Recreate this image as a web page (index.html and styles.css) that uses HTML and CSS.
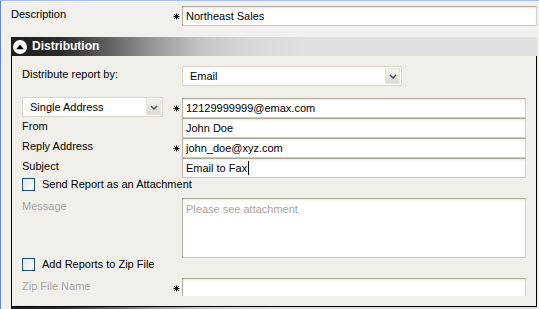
FILE: index.html
```html
<!DOCTYPE html>
<html>
<head>
<meta charset="utf-8">
<link rel="stylesheet" href="styles.css">
</head>
<body>
<div class="page">
  <div class="top-row">
    <span class="lbl">Description</span>
    <span class="req"><svg width="7" height="7" viewBox="0 0 7 7"><path d="M3.5 0.5V6.5M0.5 3.5H6.5M1.3 1.3L5.7 5.7M5.7 1.3L1.3 5.7" stroke="#000" stroke-width="0.9"/></svg></span>
    <div class="input">Northeast Sales</div>
  </div>

  <div class="sec-head">
    <span class="toggle"><svg width="14" height="14" viewBox="0 0 14 14"><circle cx="7" cy="7" r="7" fill="#fff"/><polygon points="3.2,9.2 7,4.4 10.8,9.2" fill="#000"/></svg></span>
    <span class="sec-title">Distribution</span>
  </div>

  <div class="panel">
    <div class="panel-inner">
      <div class="row row-dist">
        <span class="lbl">Distribute report by:</span>
        <span class="req"></span>
        <div class="select select-email">
          <span class="sel-text">Email</span>
          <span class="arrow"><svg width="8" height="5" viewBox="0 0 8 5"><polyline points="1,1 4,4 7,1" fill="none" stroke="#4a5670" stroke-width="1.6"/></svg></span>
        </div>
      </div>

      <div class="row">
        <div class="select select-type">
          <span class="sel-text">Single Address</span>
          <span class="arrow"><svg width="8" height="5" viewBox="0 0 8 5"><polyline points="1,1 4,4 7,1" fill="none" stroke="#4a5670" stroke-width="1.6"/></svg></span>
        </div>
        <span class="req"><svg width="7" height="7" viewBox="0 0 7 7"><path d="M3.5 0.5V6.5M0.5 3.5H6.5M1.3 1.3L5.7 5.7M5.7 1.3L1.3 5.7" stroke="#000" stroke-width="0.9"/></svg></span>
        <div class="input">12129999999@emax.com</div>
      </div>

      <div class="row">
        <span class="lbl">From</span>
        <span class="req"></span>
        <div class="input">John Doe</div>
      </div>

      <div class="row">
        <span class="lbl">Reply Address</span>
        <span class="req"><svg width="7" height="7" viewBox="0 0 7 7"><path d="M3.5 0.5V6.5M0.5 3.5H6.5M1.3 1.3L5.7 5.7M5.7 1.3L1.3 5.7" stroke="#000" stroke-width="0.9"/></svg></span>
        <div class="input">john_doe@xyz.com</div>
      </div>

      <div class="row">
        <span class="lbl">Subject</span>
        <span class="req"></span>
        <div class="input">Email to Fax<span class="caret"></span></div>
      </div>

      <div class="check-row">
        <span class="cb"></span>
        <span class="cb-label">Send Report as an Attachment</span>
      </div>

      <div class="row row-msg">
        <span class="lbl dim">Message</span>
        <span class="req"></span>
        <div class="input textarea">Please see attachment</div>
      </div>

      <div class="check-row">
        <span class="cb"></span>
        <span class="cb-label">Add Reports to Zip File</span>
      </div>

      <div class="row">
        <span class="lbl dim">Zip File Name</span>
        <span class="req"><svg width="7" height="7" viewBox="0 0 7 7"><path d="M3.5 0.5V6.5M0.5 3.5H6.5M1.3 1.3L5.7 5.7M5.7 1.3L1.3 5.7" stroke="#000" stroke-width="0.9"/></svg></span>
        <div class="input"></div>
      </div>
    </div>
  </div>

  <div class="sec-head"></div>
</div>
</body>
</html>
```

FILE: styles.css
```css
html, body {
  margin: 0;
  padding: 0;
}

body {
  width: 539px;
  height: 309px;
  overflow: hidden;
  background: #f2f0ec;
  font-family: "Liberation Sans", Arial, sans-serif;
  font-size: 11px;
  color: #000;
}

.page {
  border-top: 1px solid #a9c0ea;
  border-left: 1px solid #5a85e0;
  height: 308px;
  overflow: hidden;
}

.top-row {
  display: grid;
  grid-template-columns: 160px 11px 355px;
  height: 20px;
  margin: 5px 0 0 10px;
}

.lbl {
  line-height: 13px;
  padding-top: 2px;
  white-space: nowrap;
}

.dim {
  color: #a6a6a6;
}

.req {
  display: flex;
  align-items: center;
  justify-content: center;
  padding-right: 1px;
}

.req svg {
  display: block;
}

.input {
  box-sizing: border-box;
  height: 20px;
  background: #fff;
  border: 1px solid;
  border-color: #aeaa9c #d3d0c6 #c9c6bb #b6b2a5;
  box-shadow: inset 0 1px 2px rgba(0, 0, 0, 0.10);
  padding: 0 3px;
  line-height: 18px;
  white-space: nowrap;
  overflow: hidden;
}

.textarea {
  height: 60px;
  line-height: 13px;
  padding-top: 4px;
  color: #a6a6a6;
}

.caret {
  display: inline-block;
  width: 1px;
  height: 14px;
  background: #000;
  vertical-align: -3px;
  margin-left: 1px;
}

.sec-head {
  box-sizing: border-box;
  width: 526px;
  height: 19px;
  margin-left: 10px;
  display: flex;
  align-items: center;
  background: linear-gradient(to right, #1c1c1c 0px, #2c2c2c 50px, #5e5e5e 95px, #959595 140px, #c5c5c5 190px, #d9d9d9 240px, #e0e0e0 290px);
}

.top-row + .sec-head {
  margin-top: 11px;
}

.toggle {
  display: flex;
  margin-left: 2px;
}

.toggle svg {
  display: block;
}

.sec-title {
  margin-left: 5px;
  color: #fff;
  font-weight: bold;
  font-size: 12px;
  line-height: 19px;
}

.panel {
  box-sizing: border-box;
  width: 526px;
  margin-left: 10px;
  border: 1px solid #000;
  border-top: none;
  padding-bottom: 10px;
  background: #f1efea;
}

.panel-inner {
  box-sizing: border-box;
  height: 240px;
  overflow: hidden;
  padding: 10px 0 0 10px;
}

.row {
  display: grid;
  grid-template-columns: 149px 11px 344px;
  height: 20px;
}

.row-dist {
  margin-bottom: 12px;
}

.row-msg {
  height: 60px;
}

.select {
  box-sizing: border-box;
  height: 20px;
  display: flex;
  align-items: center;
  background: #fff;
  border: 1px solid #d9d6cd;
  padding-left: 7px;
}

.select-email {
  width: 220px;
}

.select-type {
  width: 141px;
  margin-top: -1px;
}

.sel-text {
  flex: 1;
  line-height: 18px;
  white-space: nowrap;
}

.arrow {
  box-sizing: border-box;
  width: 15px;
  height: 16px;
  margin-right: 1px;
  display: flex;
  align-items: center;
  justify-content: center;
  background: linear-gradient(#f3f2ee, #dddad2);
  border: 1px solid #e6e4dd;
}

.arrow svg {
  display: block;
}

.check-row {
  display: flex;
  align-items: flex-start;
  height: 20px;
}

.cb {
  box-sizing: border-box;
  width: 13px;
  height: 13px;
  border: 1px solid #1c5180;
  background: linear-gradient(135deg, #e6e4dc, #fbfbf8);
}

.cb-label {
  margin-left: 7px;
  line-height: 13px;
}
```
